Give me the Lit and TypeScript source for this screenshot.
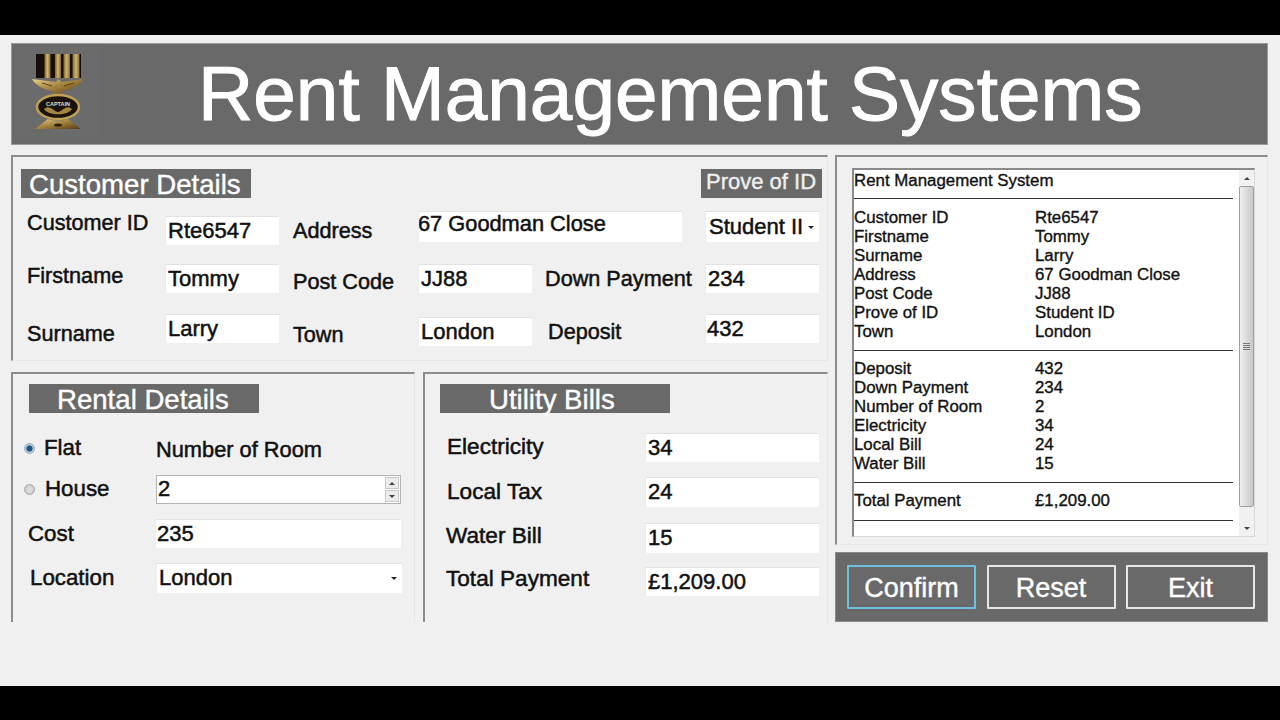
import { LitElement, html, css } from "lit";
import { customElement } from "lit/decorators.js";

const part1 = [
  ["Customer ID", "Rte6547"],
  ["Firstname", "Tommy"],
  ["Surname", "Larry"],
  ["Address", "67 Goodman Close"],
  ["Post Code", "JJ88"],
  ["Prove of ID", "Student ID"],
  ["Town", "London"],
];
const part2 = [
  ["Deposit", "432"],
  ["Down Payment", "234"],
  ["Number of Room", "2"],
  ["Electricity", "34"],
  ["Local Bill", "24"],
  ["Water Bill", "15"],
];

@customElement("app-root")
export class AppRoot extends LitElement {
  static styles = css`
    :host { display: block; width: 1280px; height: 720px; overflow: hidden; background: #000; font-family: "Liberation Sans", Arial, sans-serif; color: #111; }
    .page { margin-top: 35px; height: 651px; box-sizing: border-box; padding: 8px 12px 0 11px; background: #f0f0f0; display: flex; flex-direction: column; }
    .header { height: 102px; box-sizing: border-box; background: #696969; border: 1px solid #9a9a9a; display: flex; align-items: center; padding-left: 3px; flex: none; }
    .logo { width: 85px; height: 90px; display: block; flex: none; background: #6b6b6b; align-self: flex-start; margin-top: 3px; }
    .apptitle { margin-left: 98px; font-size: 76.55px; line-height: 90px; color: #fff; white-space: nowrap; -webkit-text-stroke: 1px #fff; }
    .body { margin-top: 10px; display: grid; grid-template-columns: 817px 433px; column-gap: 7px; height: 467px; flex: none; }
    .left { display: flex; flex-direction: column; gap: 11px; }
    .panel { box-sizing: border-box; border-top: 2px solid #8c8c8c; border-left: 2px solid #8c8c8c; border-right: 1px solid #e6e6e6; border-bottom: 1px solid #e6e6e6; }
    .customer { height: 206px; padding-top: 12px; }
    .chead { display: flex; justify-content: space-between; padding: 0 5px 0 8px; margin-bottom: 7px; }
    .sect { background: #696969; color: #fff; height: 29px; line-height: 32px; font-size: 27.6px; white-space: nowrap; box-sizing: border-box; width: 230px; -webkit-text-stroke: 0.4px #fff; }
    .sect.c { padding-left: 8px; }
    .sect.r { padding-left: 28px; margin-left: 16px; }
    .sect.u { padding-left: 49px; margin-left: 15px; }
    .prove { background: #696969; color: #eeeeee; height: 29px; line-height: 25px; width: 121px; box-sizing: border-box; padding-left: 5px; font-size: 22px; white-space: nowrap; -webkit-text-stroke: 0.4px #eeeeee; }
    .cgrid { display: grid; grid-template-columns: 152px 128px 125px 127px 160px 115px; grid-template-rows: 55px 50px 49px; align-items: start; }
    .lb { font-size: 21.65px; line-height: 24px; white-space: nowrap; -webkit-text-stroke: 0.5px #111; }
    .f { box-sizing: border-box; height: 29px; background: #fff; border-top: 1px solid #e2e2e2; border-left: 1px solid #ececec; font-size: 22px; line-height: 28px; padding-left: 2px; white-space: nowrap; overflow: hidden; -webkit-text-stroke: 0.5px #111; display: flex; }
    .w114 { width: 114px; }
    .addr { height: 31px; line-height: 24px; font-size: 21.8px; padding-left: 0; text-indent: -1px; }
    .stu { height: 31px; line-height: 29px; padding-left: 3px; }
    .h30 { height: 30px; }
    .wide { width: 264px; grid-column: span 2; }
    .in14 { margin-left: 14px; }
    .in15 { margin-left: 15px; }
    .in17 { margin-left: 17px; }
    .in1 { margin-left: 1px; }
    .in3 { margin-left: 3px; }
    .p1 { padding-left: 1px; }
    .t4 { margin-top: 4px; } .t5 { margin-top: 5px; } .t6 { margin-top: 6px; } .t7 { margin-top: 7px; } .t8 { margin-top: 8px; } .t10 { margin-top: 10px; } .t11 { margin-top: 11px; } .t12 { margin-top: 12px; } .t13 { margin-top: 13px; } .t14 { margin-top: 14px; }
    .bottom { display: grid; grid-template-columns: 404px 405px; column-gap: 8px; height: 250px; }
    .rental, .utility { padding-top: 10px; border-bottom: none; }
    .rgrid { margin-top: 12px; display: grid; grid-template-columns: 142px 246px; grid-template-rows: 45px 45px 44px 40px; align-items: start; }
    .rgrid .lb { font-size: 22.3px; }
    .radio { display: flex; align-items: center; margin-left: 11px; gap: 9px; }
    .radio.h { gap: 10px; }
    .dot { width: 11px; height: 11px; border-radius: 50%; box-sizing: border-box; border: 1px solid #a8a8a8; background: radial-gradient(circle, #dcdcdc 0 30%, #bcbcbc 100%); flex: none; }
    .dot.on { background: radial-gradient(circle, #1a5688 0 42%, #b4cbdc 55%, #c8d2da 100%); }
    .rgrid .lb.nr { font-size: 21.8px; }
    .spin { box-sizing: border-box; width: 245px; height: 29px; background: #fff; border: 1px solid #b4b4b4; font-size: 22px; line-height: 26px; padding-left: 1px; display: flex; justify-content: space-between; -webkit-text-stroke: 0.5px #111; }
    .spbtns { display: flex; flex-direction: column; gap: 1px; width: 14px; margin: 1px; }
    .spbtns span { flex: 1; background: #ececec; border: 1px solid #c8c8c8; display: flex; align-items: center; justify-content: center; }
    .w246 { width: 246px; }
    .sel { justify-content: space-between; align-items: flex-start; }
    .caret { width: 0; height: 0; border-left: 3px solid transparent; border-right: 3px solid transparent; border-top: 3px solid #222; align-self: center; margin-right: 5px; flex: none; }
    .ugrid { margin-top: 12px; display: grid; grid-template-columns: 220px 174px; grid-template-rows: 45px 46px 44px 40px; align-items: start; }
    .ugrid .lb { font-size: 22.6px; }
    .in22 { margin-left: 22px; }
    .in21 { margin-left: 21px; }
    .right { display: flex; flex-direction: column; gap: 7px; }
    .rpanel { height: 390px; padding: 11px 13px 8px 15px; }
    .receipt { box-sizing: border-box; width: 403px; height: 369px; background: #fff; border-top: 2px solid #8a8a8a; border-left: 2px solid #8a8a8a; border-right: 1px solid #d8d8d8; border-bottom: 1px solid #d8d8d8; display: flex; justify-content: space-between; }
    .lines { width: 379px; box-sizing: border-box; padding-top: 1px; font-size: 16.85px; line-height: 19px; -webkit-text-stroke: 0.35px #111; }
    .row { display: grid; grid-template-columns: 181px 1fr; height: 19px; white-space: nowrap; }
    .ttl { height: 18px; white-space: nowrap; }
    .rule { height: 18px; display: flex; align-items: center; }
    .rule.first { height: 19px; }
    .rule.last { height: 20px; }
    .rule::after { content: ""; display: block; width: 100%; height: 1px; background: #333; }
    .sb { width: 15px; display: flex; flex-direction: column; background: #f1f1f1; flex: none; }
    .arr { height: 16px; display: flex; align-items: center; justify-content: center; flex: none; }
    .up { width: 0; height: 0; border-left: 3px solid transparent; border-right: 3px solid transparent; border-bottom: 3px solid #444; }
    .dn { width: 0; height: 0; border-left: 3px solid transparent; border-right: 3px solid transparent; border-top: 3px solid #444; }
    .thumb { height: 321px; box-sizing: border-box; border: 1px solid #a0a0a0; border-radius: 2px; background: linear-gradient(90deg, #efefef, #c8c8c8); display: flex; flex-direction: column; align-items: center; justify-content: center; gap: 1px; }
    .thumb i { display: block; width: 7px; height: 1px; background: #777; }
    .track { flex: 1; }
    .buttons { height: 70px; box-sizing: border-box; background: #696969; padding: 12px 11px; display: flex; gap: 10.5px; flex: none; border: 1px solid #8a8a8a; }
    .btn { box-sizing: border-box; width: 129px; height: 44px; border: 2px solid #e6e6e6; border-radius: 1px; color: #fff; font-size: 27px; line-height: 42px; text-align: center; -webkit-text-stroke: 0.4px #fff; }
    .btn.focus { border-color: #6fc0de; }
  `;

  private logo() {
    return html`<svg class="logo" viewBox="15 47 85 90" aria-hidden="true">
      <defs>
        <linearGradient id="g" x1="0" y1="0" x2="1" y2="1">
          <stop offset="0" stop-color="#e6cf8c"/><stop offset="0.5" stop-color="#a07f3a"/><stop offset="1" stop-color="#4f3a17"/>
        </linearGradient>
        <linearGradient id="s" x1="0" y1="0" x2="1" y2="0">
          <stop offset="0" stop-color="#7f6630"/><stop offset="0.5" stop-color="#d2b66c"/><stop offset="1" stop-color="#7f6630"/>
        </linearGradient>
      </defs>
      <rect x="36" y="54" width="45" height="24" fill="#15100c"/>
      <rect x="44.5" y="54" width="6" height="24" fill="url(#s)"/>
      <rect x="55" y="54" width="6" height="24" fill="url(#s)"/>
      <rect x="63.5" y="54" width="6.5" height="24" fill="url(#s)"/>
      <rect x="72.5" y="54" width="7" height="24" fill="url(#s)"/>
      <path d="M32 79 L56 82 L58 79 L62 82 L83 79 C80 86 71 90 64 91 L58 95 L52 91 C45 90 36 86 32 79 Z" fill="url(#g)"/>
      <path d="M42 83 L52 86 M74 83 L64 86" stroke="#5b431a" stroke-width="1" fill="none"/>
      <ellipse cx="58" cy="107" rx="21" ry="12" fill="#1a130c" stroke="#c0a052" stroke-width="2.5"/>
      <path d="M44 109 C50 104 54 112 58 112 C62 112 66 104 72 109 C68 116 48 116 44 109 Z" fill="#a5843f"/>
      <text x="58" y="106" text-anchor="middle" font-size="5.5" font-weight="700" font-family="Liberation Sans, sans-serif" fill="#e8dcc0">CAPTAIN</text>
      <path d="M35 129 L48 119 C54 121 62 121 68 119 L81 129 Z" fill="url(#g)"/>
      <ellipse cx="58" cy="125" rx="4" ry="1.6" fill="#2b1e0e"/>
    </svg>`;
  }

  render() {
    return html`<div class="page">
      <div class="header">${this.logo()}<div class="apptitle">Rent Management Systems</div></div>
      <div class="body">
        <div class="left">
          <section class="panel customer">
            <div class="chead"><div class="sect c">Customer Details</div><div class="prove">Prove of ID</div></div>
            <div class="cgrid">
              <div class="lb in14 t6">Customer ID</div><div class="f w114 t11">Rte6547</div>
              <div class="lb t14">Address</div><div class="f wide t6 addr">67 Goodman Close</div>
              <div class="f w114 t6 stu sel"><span>Student II</span><span class="caret"></span></div>

              <div class="lb in14 t4">Firstname</div><div class="f w114 t4">Tommy</div>
              <div class="lb t10">Post Code</div><div class="f w114 t4">JJ88</div>
              <div class="lb t7">Down Payment</div><div class="f w114 t4">234</div>

              <div class="lb in14 t12">Surname</div><div class="f w114 t4">Larry</div>
              <div class="lb t13">Town</div><div class="f w114 t7">London</div>
              <div class="lb in3 t10">Deposit</div><div class="f w114 t4 p1">432</div>
            </div>
          </section>
          <div class="bottom">
            <section class="panel rental">
              <div class="sect r">Rental Details</div>
              <div class="rgrid">
                <div class="radio t11"><span class="dot on"></span><span class="lb">Flat</span></div>
                <div class="lb nr t13 in1">Number of Room</div>
                <div class="radio h t7"><span class="dot"></span><span class="lb">House</span></div>
                <div class="spin t5 in1"><span>2</span><span class="spbtns"><span><b class="up"></b></span><span><b class="dn"></b></span></span></div>
                <div class="lb in15 t7">Cost</div>
                <div class="f w246 t4 p1">235</div>
                <div class="lb t7 in17">Location</div>
                <div class="f w246 t4 h30 sel in1"><span>London</span><span class="caret"></span></div>
              </div>
            </section>
            <section class="panel utility">
              <div class="sect u">Utility Bills</div>
              <div class="ugrid">
                <div class="lb in22 t10">Electricity</div><div class="f t8">34</div>
                <div class="lb in22 t10">Local Tax</div><div class="f t7 h30">24</div>
                <div class="lb in21 t8">Water Bill</div><div class="f t7 h30">15</div>
                <div class="lb in21 t7">Total Payment</div><div class="f t7">£1,209.00</div>
              </div>
            </section>
          </div>
        </div>
        <div class="right">
          <section class="panel rpanel">
            <div class="receipt">
              <div class="lines">
                <div class="ttl">Rent Management System</div>
                <div class="rule first"></div>
                ${part1.map(([a, b]) => html`<div class="row"><span>${a}</span><span>${b}</span></div>`)}
                <div class="rule"></div>
                ${part2.map(([a, b]) => html`<div class="row"><span>${a}</span><span>${b}</span></div>`)}
                <div class="rule"></div>
                <div class="row"><span>Total Payment</span><span>£1,209.00</span></div>
                <div class="rule last"></div>
              </div>
              <div class="sb">
                <div class="arr"><span class="up"></span></div>
                <div class="thumb"><i></i><i></i><i></i><i></i></div>
                <div class="track"></div>
                <div class="arr"><span class="dn"></span></div>
              </div>
            </div>
          </section>
          <div class="buttons">
            <div class="btn focus">Confirm</div><div class="btn">Reset</div><div class="btn">Exit</div>
          </div>
        </div>
      </div>
    </div>`;
  }
}
